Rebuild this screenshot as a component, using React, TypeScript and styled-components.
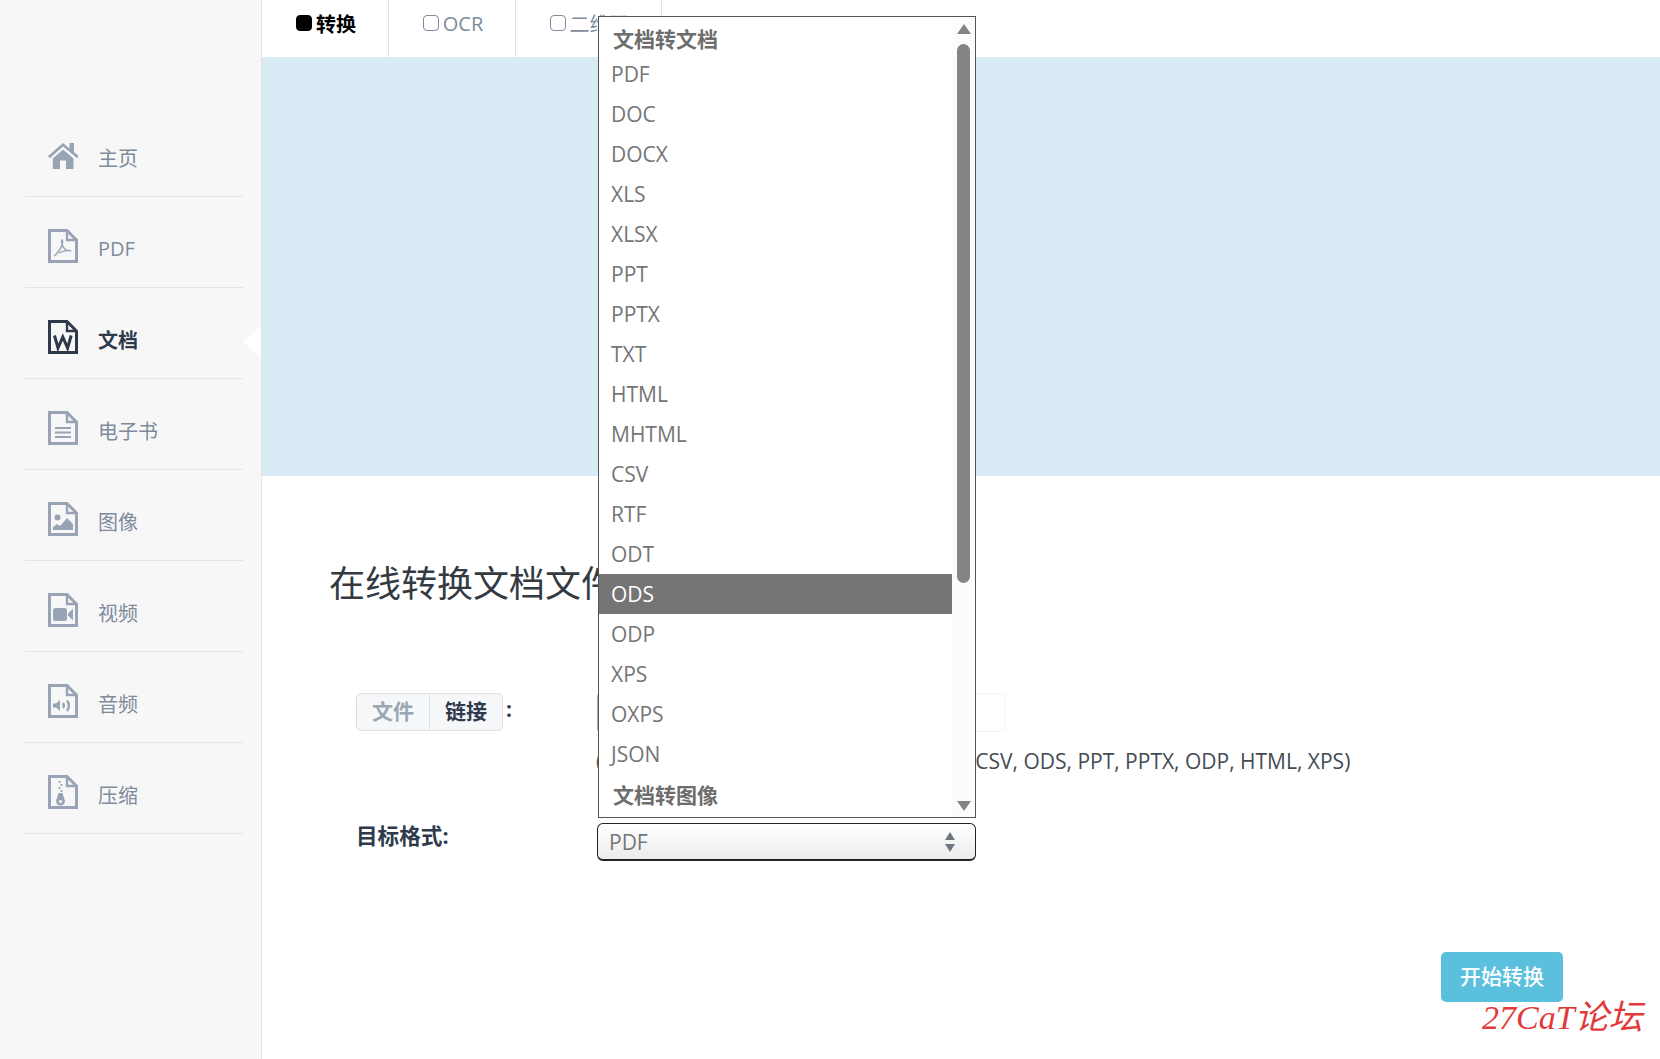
import React from 'react'
import styled, { createGlobalStyle } from 'styled-components'

const FONT = `"Open Sans", "Noto Sans CJK SC", sans-serif`

const Global = createGlobalStyle`
  html, body { margin: 0; padding: 0; height: 100%; background: #fff; }
  body { font-family: ${FONT}; overflow: hidden; }
  * { box-sizing: border-box; }
`

const Page = styled.div`
  position: relative;
  display: flex;
  width: 1660px;
  height: 1059px;
  overflow: hidden;
  background: #fff;
`

const Sidebar = styled.aside`
  flex: 0 0 262px;
  padding: 106px 18px 0 25px;
  background: #f7f7f8;
  border-right: 1px solid #e4e4e6;
`

const NavItem = styled.div<{ $active?: boolean }>`
  position: relative;
  display: flex;
  align-items: center;
  height: 91px;
  padding: 12px 0 0 23px;
  gap: 20px;
  border-bottom: 1px solid #e3e4e6;
  color: ${p => (p.$active ? '#2e3a4b' : '#7f8b9c')};
  font-size: 20px;
  font-weight: ${p => (p.$active ? 700 : 400)};

  svg {
    flex: none;
    width: 30px;
    height: 34px;
    margin-top: -4px;
  }
`

const Notch = styled.span`
  position: absolute;
  top: 38px;
  right: -18px;
  width: 0;
  height: 0;
  border-top: 16px solid transparent;
  border-bottom: 16px solid transparent;
  border-right: 18px solid #fff;
`

const Main = styled.main`
  flex: 1;
  min-width: 0;
`

const Tabs = styled.nav`
  display: flex;
  height: 57px;
`

const Tab = styled.div<{ $width: number; $active?: boolean }>`
  display: flex;
  align-items: center;
  justify-content: center;
  gap: 4px;
  width: ${p => p.$width}px;
  padding: 0 0 11px 2px;
  border-right: 1px solid #dfe1e4;
  color: ${p => (p.$active ? '#000' : '#7f8b9c')};
  font-size: 20px;
  font-weight: ${p => (p.$active ? 700 : 400)};
`

const TabBox = styled.span<{ $active?: boolean }>`
  display: inline-block;
  width: 16px;
  height: 16px;
  margin-top: -1px;
  border-radius: 4px;
  border: 1.5px solid ${p => (p.$active ? '#000' : '#7f8b9c')};
  background: ${p => (p.$active ? '#000' : 'transparent')};
`

const Banner = styled.div`
  height: 419px;
  background: #d9ebf5;
`

const Content = styled.section`
  padding: 79px 0 0 67px;
`

const Title = styled.h1`
  margin: 0 0 80px;
  color: #333a42;
  font-size: 36px;
  line-height: 58px;
  font-weight: 400;
`

const FormRow = styled.div`
  display: grid;
  grid-template-columns: 241px 1fr;
  padding-left: 27px;
`

const Toggle = styled.div`
  display: flex;
  align-items: flex-start;
  height: 38px;
  color: #2e3a4b;
  font-size: 21px;
  font-weight: 700;
  line-height: 32px;
`

const ToggleGroup = styled.div`
  display: flex;
  height: 38px;
  margin-right: 3px;
  border: 1px solid #dcdfe3;
  border-radius: 5px;
  background: #f6f7f8;
`

const ToggleButton = styled.span<{ $muted?: boolean }>`
  width: ${p => (p.$muted ? 72 : 73)}px;
  line-height: 35px;
  text-align: center;
  color: ${p => (p.$muted ? '#9aa6b4' : '#2e3a4b')};
  border-left: ${p => (p.$muted ? 'none' : '1px solid #dcdfe3')};
`

const FileField = styled.div`
  width: 408px;
  height: 39px;
  border: 1px solid #f4f4f4;
  border-left: 2px solid #aaa;
  border-radius: 4px;
`

const Hint = styled.p`
  margin: 16px 0 0 -1px;
  color: #444b53;
  font-size: 21px;
  line-height: 27px;
  white-space: nowrap;
`

const TargetRow = styled(FormRow)`
  margin-top: 47px;
`

const TargetLabel = styled.label`
  color: #2e3a4b;
  font-size: 21.6px;
  font-weight: 700;
  line-height: 28px;
`

const SelectBox = styled.div`
  display: flex;
  align-items: center;
  justify-content: space-between;
  width: 379px;
  height: 38px;
  margin-top: 1px;
  padding: 0 20px 0 11px;
  border: 1px solid #222;
  border-bottom-width: 2px;
  border-radius: 6px;
  background: linear-gradient(#fff, #ececec);
  color: #757575;
  font-size: 21px;
`

const Actions = styled.div`
  display: flex;
  justify-content: flex-end;
  margin-top: 91px;
  padding-right: 97px;
`

const StartButton = styled.button`
  width: 122px;
  height: 50px;
  padding: 0 0 4px;
  border: none;
  border-radius: 5px;
  background: #5bc0de;
  color: #fff;
  font-family: ${FONT};
  font-size: 21px;
  font-weight: 500;
`

const Watermark = styled.span`
  position: absolute;
  left: 1482px;
  top: 996px;
  color: #e23a3a;
  font-family: "Liberation Serif", "Noto Sans CJK SC", serif;
  font-size: 34px;
  font-style: italic;
  line-height: 44px;
  white-space: nowrap;
`

const Popup = styled.div`
  position: absolute;
  left: 598px;
  top: 16px;
  display: flex;
  width: 378px;
  height: 802px;
  border: 1px solid #555;
  background: #fff;
  overflow: hidden;
`

const OptionList = styled.div`
  flex: 1;
  min-width: 0;
`

const GroupLabel = styled.div`
  height: 37px;
  padding: 6px 0 0 14px;
  color: #6d6d6d;
  font-size: 21px;
  font-weight: 700;
  line-height: 33px;
`

const Option = styled.div<{ $selected?: boolean }>`
  height: 40px;
  padding-left: 12px;
  background: ${p => (p.$selected ? '#757575' : 'transparent')};
  color: ${p => (p.$selected ? '#fff' : '#757575')};
  font-size: 21px;
  line-height: 40px;
`

const GroupLabelLow = styled(GroupLabel)`
  height: 42px;
  padding-top: 5px;
`

const Scrollbar = styled.div`
  display: flex;
  flex-direction: column;
  align-items: center;
  flex: 0 0 23px;
  padding-top: 7px;
  background: #fcfcfc;
`

const ScrollArrow = styled.span<{ $down?: boolean }>`
  width: 0;
  height: 0;
  border-left: 7.5px solid transparent;
  border-right: 7.5px solid transparent;
  ${p => (p.$down ? 'border-top: 10px solid #848484;' : 'border-bottom: 10px solid #848484;')}
  ${p => (p.$down ? 'margin-top: 218px;' : '')}
`

const ScrollThumb = styled.span`
  width: 13px;
  height: 539px;
  margin-top: 10px;
  border-radius: 7px;
  background: #848484;
`

const SortArrows = styled.svg`
  width: 10px;
  height: 20px;
  fill: #6f7780;
`

const FILE_BODY = 'M1.5 1.5H19L28.5 11V32.5H1.5Z'
const FILE_FOLD = 'M19 1.5V11H28.5'

function FileIcon({ color, children }: { color: string; children?: React.ReactNode }) {
  return (
    <svg viewBox="0 0 30 34" fill="none" stroke={color} strokeWidth="3">
      <path d={FILE_BODY} />
      <path d={FILE_FOLD} strokeWidth="2.4" />
      {children}
    </svg>
  )
}

const GREY = '#98a4b5'
const DARK = '#2e3a4b'

const navItems: { label: string; icon: React.ReactNode; active?: boolean }[] = [
  {
    label: '主页',
    icon: (
      <svg viewBox="0 0 30 34" fill={GREY}>
        <path d="M0 18 15 5l6.500 5.500V5h4.500v9.300L31 18l-1.800 2.300L15 8.600 1.800 20.300Z" />
        <path d="M4.800 20.500 15 11.500l10.500 9V31h-7.500v-8.500h-6V31H4.800Z" />
      </svg>
    ),
  },
  {
    label: 'PDF',
    icon: (
      <FileIcon color={GREY}>
        <path
          d="M6 27c3-2 6-6 8-11 .6-2 .8-4 .2-5-1 .6-.6 4 1 7 1.400 2.500 4 4 8 4-3-1-9 0-12 2"
          strokeWidth="1.500"
        />
      </FileIcon>
    ),
  },
  {
    label: '文档',
    active: true,
    icon: (
      <FileIcon color={DARK}>
        <path d="M6.500 15.500 10 28l4.800-11 4.800 11 3.600-12.500" strokeWidth="3" />
      </FileIcon>
    ),
  },
  {
    label: '电子书',
    icon: (
      <FileIcon color={GREY}>
        <path d="M7 17h16M7 21.500h16M7 26h16" strokeWidth="2.200" />
      </FileIcon>
    ),
  },
  {
    label: '图像',
    icon: (
      <FileIcon color={GREY}>
        <circle cx="9.500" cy="15.500" r="3" fill={GREY} stroke="none" />
        <path d="M5 28v-3l4-3 3 2 7-8 6 6v6Z" fill={GREY} stroke="none" />
      </FileIcon>
    ),
  },
  {
    label: '视频',
    icon: (
      <FileIcon color={GREY}>
        <rect x="5" y="15" width="14" height="13" rx="2.500" fill={GREY} stroke="none" />
        <path d="M25 15.500v12l-5-5v-2Z" fill={GREY} stroke="none" />
      </FileIcon>
    ),
  },
  {
    label: '音频',
    icon: (
      <FileIcon color={GREY}>
        <path d="M5 19.500h3l4-3.500v11l-4-3.500H5Z" fill={GREY} stroke="none" />
        <path d="M15 19c1 1.500 1 3.500 0 5M19 16.500c2.500 3 2.500 7.500 0 10.500" strokeWidth="2.400" />
      </FileIcon>
    ),
  },
  {
    label: '压缩',
    icon: (
      <FileIcon color={GREY}>
        <path d="M11.500 6v2M13.500 9v2M11.500 12v2M13.500 15v2" strokeWidth="1.800" />
        <path d="M10.500 18h4l2.500 8a4.500 4.500 0 0 1-9 0Z" fill={GREY} stroke="none" />
        <circle cx="12.500" cy="26.500" r="1.600" fill="#f7f7f8" stroke="none" />
      </FileIcon>
    ),
  },
]

const documentFormats = [
  'PDF', 'DOC', 'DOCX', 'XLS', 'XLSX', 'PPT', 'PPTX', 'TXT', 'HTML',
  'MHTML', 'CSV', 'RTF', 'ODT', 'ODS', 'ODP', 'XPS', 'OXPS', 'JSON',
]

export default function App() {
  return (
    <Page>
      <Global />
      <Sidebar>
        {navItems.map(item => (
          <NavItem key={item.label} $active={item.active}>
            {item.icon}
            {item.label}
            {item.active && <Notch />}
          </NavItem>
        ))}
      </Sidebar>
      <Main>
        <Tabs>
          <Tab $width={127} $active>
            <TabBox $active />
            转换
          </Tab>
          <Tab $width={127}>
            <TabBox />
            OCR
          </Tab>
          <Tab $width={146}>
            <TabBox />
            二维码
          </Tab>
        </Tabs>
        <Banner />
        <Content>
          <Title>在线转换文档文件</Title>
          <FormRow>
            <Toggle>
              <ToggleGroup>
                <ToggleButton $muted>文件</ToggleButton>
                <ToggleButton>链接</ToggleButton>
              </ToggleGroup>
              :
            </Toggle>
            <div>
              <FileField />
              <Hint>(DOC, DOCX, RTF, ODT, TXT, XLS, XLSX, CSV, ODS, PPT, PPTX, ODP, HTML, XPS)</Hint>
            </div>
          </FormRow>
          <TargetRow>
            <TargetLabel>目标格式:</TargetLabel>
            <SelectBox>
              PDF
              <SortArrows viewBox="0 0 10 20">
                <path d="M5 0 10 8H0ZM5 20 0 12h10Z" />
              </SortArrows>
            </SelectBox>
          </TargetRow>
          <Actions>
            <StartButton>开始转换</StartButton>
          </Actions>
        </Content>
      </Main>
      <Popup>
        <OptionList>
          <GroupLabel>文档转文档</GroupLabel>
          {documentFormats.map(format => (
            <Option key={format} $selected={format === 'ODS'}>
              {format}
            </Option>
          ))}
          <GroupLabelLow>文档转图像</GroupLabelLow>
        </OptionList>
        <Scrollbar>
          <ScrollArrow />
          <ScrollThumb />
          <ScrollArrow $down />
        </Scrollbar>
      </Popup>
      <Watermark>27CaT论坛</Watermark>
    </Page>
  )
}
